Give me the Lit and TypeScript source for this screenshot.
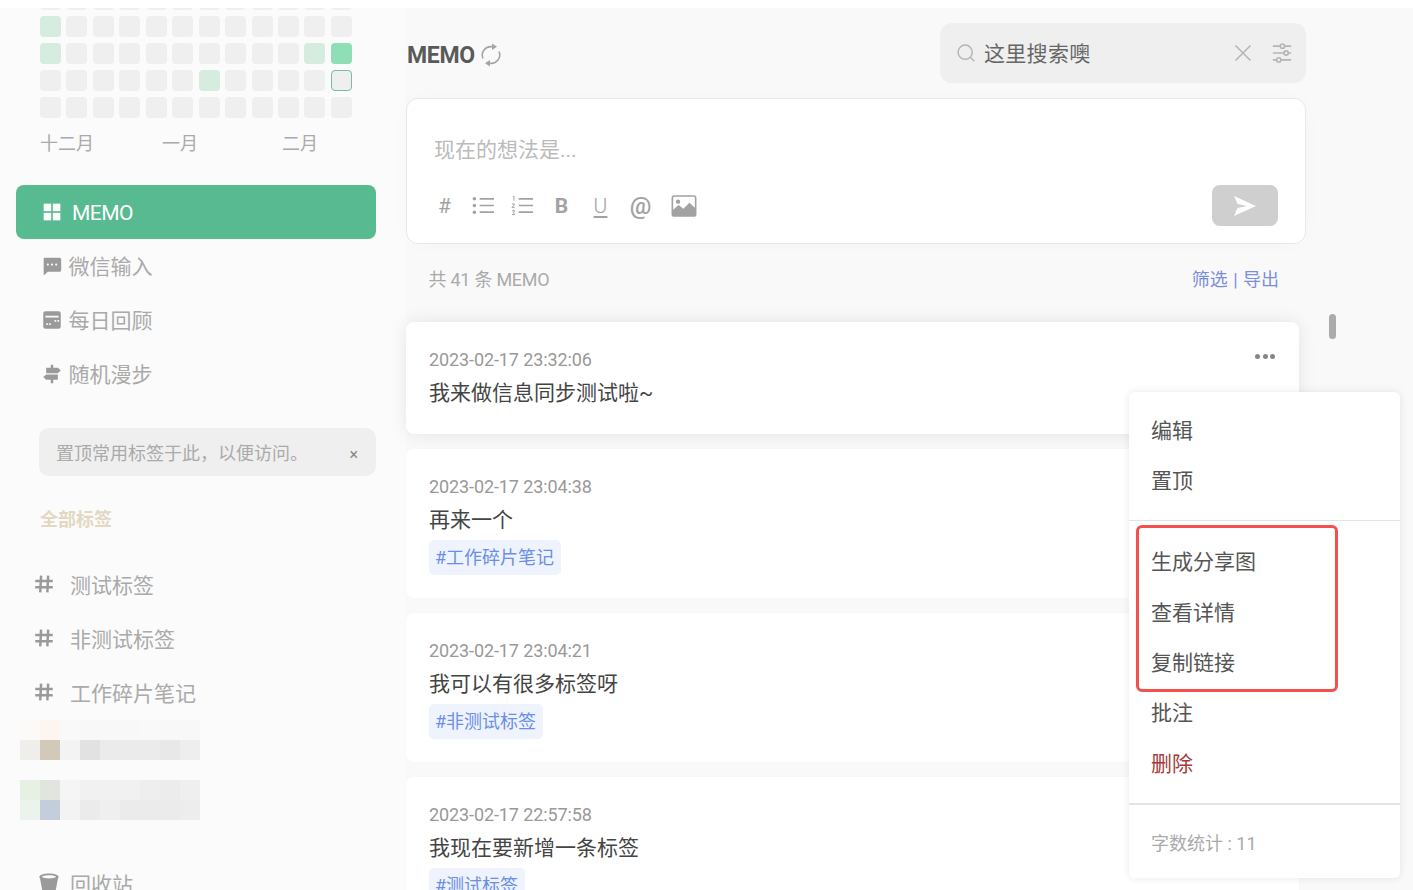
import { LitElement, html, css, svg } from 'lit';
import { customElement } from 'lit/decorators.js';

// heat map levels, 0 empty, 1 light, 2 mid, 3 today
const HEAT = [
  [0, 0, 0, 0, 0, 0, 0, 0, 0, 0, 0, 0],
  [1, 0, 0, 0, 0, 0, 0, 0, 0, 0, 0, 0],
  [1, 0, 0, 0, 0, 0, 0, 0, 0, 0, 1, 2],
  [0, 0, 0, 0, 0, 0, 1, 0, 0, 0, 0, 3],
  [0, 0, 0, 0, 0, 0, 0, 0, 0, 0, 0, 0],
];

const MOSAIC_A = [
  ['#fbfaf8', '#fdf5ef', '#f9f9f9', '#f8f8f8', '#f8f8f8', '#f8f8f8', '#f9f9f9', '#f8f8f8', '#f8f8f8'],
  ['#efeeea', '#d3c9b8', '#f3f3f3', '#e2e2e2', '#ebebeb', '#ebebeb', '#ebebeb', '#e8e8e8', '#eeeeee'],
];
const MOSAIC_B = [
  ['#e6f0e3', '#e2e5df', '#f5f5f5', '#f1f1f1', '#f1f1f1', '#f1f1f1', '#eeeeee', '#ececec', '#efefef'],
  ['#ecf2ec', '#c3ceda', '#f3f3f3', '#ebebeb', '#efefef', '#ebebeb', '#ebebeb', '#ebebeb', '#ededed'],
];

const MEMOS = [
  { time: '2023-02-17 23:04:38', text: '再来一个', tag: '#工作碎片笔记' },
  { time: '2023-02-17 23:04:21', text: '我可以有很多标签呀', tag: '#非测试标签' },
  { time: '2023-02-17 22:57:58', text: '我现在要新增一条标签', tag: '#测试标签' },
];

const icon = (size: number, body: unknown, box = 24) => html`<svg
  width=${size}
  height=${size}
  viewBox="0 0 ${box} ${box}"
  fill="currentColor"
>${body}</svg>`;

const ICONS = {
  grid: svg`<rect x="2" y="2" width="9" height="9"/><rect x="13" y="2" width="9" height="9"/><rect x="2" y="13" width="9" height="9"/><rect x="13" y="13" width="9" height="9"/>`,
  chat: svg`<path fill-rule="evenodd" d="M3 2h18a2 2 0 0 1 2 2v13a2 2 0 0 1-2 2H7l-5 4.500V3a1 1 0 0 1 1-1zm4 7a1.300 1.300 0 1 0 0 2.600A1.300 1.300 0 0 0 7 9zm5 0a1.300 1.300 0 1 0 0 2.600A1.300 1.300 0 0 0 12 9zm5 0a1.300 1.300 0 1 0 0 2.600A1.300 1.300 0 0 0 17 9z"/>`,
  calendar: svg`<path fill-rule="evenodd" d="M4 1.500h16A2.500 2.500 0 0 1 22.500 4v16a2.500 2.500 0 0 1-2.500 2.500H4A2.500 2.500 0 0 1 1.500 20V4A2.500 2.500 0 0 1 4 1.500zM4 7v2h16V7H4zm11 5v2h2v-2h-2zm3.500 0v2h2v-2h-2zM5 16v2h2v-2H5zm3.500 0v2h2v-2h-2z"/>`,
  sign: svg`<path d="M10.500 1h3v3.500H19l3.500 3.200L19 11H5V4.500h5.500zM5 12.500h14V19h-5.500v4h-3v-4H5l-3.500-3.300z"/>`,
  trash: svg`<path d="M12 1.500c5.800 0 10.500 1.400 10.500 3.800 0 .8-.3 1.500-.8 2L19.200 21c-.2 1.200-3.200 2-7.200 2s-7-.8-7.200-2L2.300 7.300c-.5-.5-.8-1.200-.8-2C1.500 2.900 6.200 1.500 12 1.500zm0 2c-4.200 0-7.500.8-7.500 1.800S7.800 7 12 7s7.500-.7 7.500-1.700S16.200 3.500 12 3.500z"/>`,
  image: svg`<path fill-rule="evenodd" d="M3 2h18a2.500 2.500 0 0 1 2.500 2.500v15A2.500 2.500 0 0 1 21 22H3a2.500 2.500 0 0 1-2.500-2.500v-15A2.500 2.500 0 0 1 3 2zm0 1.500a1 1 0 0 0-1 1v11l5-4.500 4.500 3.500 5.500-5.500 5 4.500V4.500a1 1 0 0 0-1-1H3zM6.500 6a2 2 0 1 1 0 4 2 2 0 0 1 0-4z"/>`,
  send: svg`<path d="M1 2l22 10L1 22l3.500-8L14 12 4.500 10z"/>`,
};

const lineIcon = (size: number, body: unknown) => html`<svg
  width=${size}
  height=${size}
  viewBox="0 0 24 24"
  fill="none"
  stroke="currentColor"
  stroke-width="1.800"
>${body}</svg>`;

const LINE = {
  refresh: svg`<path stroke-width="1.600" d="M4 15.500A8.500 8.500 0 0 1 13 3.700"/><path stroke-width="1.600" d="M20 8.500A8.500 8.500 0 0 1 11 20.300"/><path fill="currentColor" stroke="none" d="M13 .5l5 3.200L13 7zM11 17l-5 3.300 5 3.200z"/>`,
  search: svg`<circle cx="11" cy="11" r="8.500"/><path d="M17.500 17.500L22 22"/>`,
  close: svg`<path d="M3 3l18 18M21 3L3 21"/>`,
  sliders: svg`<path d="M2 4.500h8M15 4.500h7M2 12h12M19 12h3M2 19.500h4M11 19.500h11"/><circle cx="12.500" cy="4.500" r="2.300"/><circle cx="16.500" cy="12" r="2.300"/><circle cx="8.500" cy="19.500" r="2.300"/>`,
  list: svg`<path d="M8 5h15M8 12h15M8 19h15"/><g fill="currentColor" stroke="none"><circle cx="2.500" cy="5" r="1.800"/><circle cx="2.500" cy="12" r="1.800"/><circle cx="2.500" cy="19" r="1.800"/></g>`,
  olist: svg`<path d="M8 5h15M8 12h15M8 19h15"/><path stroke-width="1" d="M2 3l1-1v5M1 10.500h3L1 14h3M1 17.500h3l-1.500 2L4 21.500H1"/>`,
  hash: svg`<path stroke-width="3" d="M8.500 2L7.500 22M17 2l-1 20M1.500 8.500h21M1.500 16h21"/>`,
};

@customElement('app-root')
export class AppRoot extends LitElement {
  static styles = css`
    :host {
      display: block;
      font-family: Roboto, "Noto Sans CJK SC", sans-serif;
    }

    .page {
      position: relative;
      display: flex;
      height: 882px;
      overflow: hidden;
      border-top: 8px solid #fff;
      background: #f9f9fa;
    }

    .sidebar {
      flex: none;
      width: 406px;
      height: 100%;
      overflow: hidden;
      background: #fbfbfb;
    }

    .heat {
      display: grid;
      grid-template-columns: repeat(12, 21px);
      grid-auto-rows: 21px;
      column-gap: 5.45px;
      row-gap: 6px;
      margin: -19px 0 0 40px;
    }

    .cell {
      border-radius: 4px;
      background: #efefef;
      box-sizing: border-box;
    }

    .cell.l1 { background: #d5ecdf; }
    .cell.l2 { background: #8fdeb6; }
    .cell.l3 { border: 1px solid #78bd9c; }

    .months {
      display: flex;
      margin: 13px 0 0 40px;
      font-size: 18px;
      line-height: 26px;
      color: #aaa;
    }

    .months span:nth-child(1) { width: 122px; }
    .months span:nth-child(2) { width: 120px; }

    .nav {
      margin: 28px 30px 0 16px;
      display: flex;
      flex-direction: column;
    }

    .nav-item {
      display: flex;
      align-items: center;
      gap: 7px;
      height: 54px;
      padding-left: 25.5px;
      font-size: 21px;
      color: #aaa;
      border-radius: 8px;
    }

    .nav-item svg { color: #9a9a9a; }
    .nav-item span { margin-top: -2px; }

    .nav-item.active {
      gap: 10.5px;
      background: #57ba90;
      color: #fff;
      letter-spacing: -0.5px;
    }

    .nav-item.active svg { color: #fff; }
    .nav-item.active span { margin-top: 2px; }

    .tip {
      display: flex;
      align-items: center;
      justify-content: space-between;
      height: 48px;
      margin: 27px 30px 0 39px;
      padding: 0 18px 0 17px;
      border-radius: 10px;
      background: #efefef;
      font-size: 18px;
      color: #aaa;
    }

    .tip i {
      font-style: normal;
      font-size: 16px;
      color: #888;
      margin-top: 4px;
    }

    .tags-title {
      margin: 31px 0 0 40px;
      font-size: 18px;
      line-height: 26px;
      font-weight: 700;
      color: #e2d8c2;
    }

    .tags {
      margin: 24px 0 0 34px;
    }

    .tag-row {
      display: flex;
      align-items: center;
      gap: 16px;
      height: 54px;
      font-size: 21px;
      color: #aaa;
    }

    .tag-row svg {
      flex: none;
      color: #9a9a9a;
    }

    .mosaic {
      display: grid;
      grid-template-columns: repeat(9, 20px);
      grid-auto-rows: 20px;
      margin-left: 20px;
    }

    .mosaic.first { margin-top: 1px; }
    .mosaic.second { margin-top: 20px; }

    .trash {
      display: flex;
      align-items: center;
      gap: 10px;
      margin: 46px 0 0 38px;
      height: 34px;
      font-size: 21px;
      color: #aaa;
    }

    .trash svg { color: #9a9a9a; }

    .main {
      flex: none;
      width: 900px;
    }

    .head {
      display: flex;
      align-items: center;
      justify-content: space-between;
      height: 60px;
      margin: 15px 0;
    }

    .title {
      display: flex;
      align-items: center;
      gap: 4px;
      padding: 4px 0 0 1px;
      font-size: 23px;
      font-weight: 700;
      letter-spacing: -0.3px;
      color: #5a5a5a;
    }

    .title svg { color: #a5a5a5; }

    .search {
      display: flex;
      align-items: center;
      width: 366px;
      height: 60px;
      box-sizing: border-box;
      padding: 0 13px 0 16px;
      border-radius: 12px;
      background: #efefef;
      font-size: 21px;
      color: #666;
    }

    .search svg { flex: none; color: #b5b5b5; }
    .search span { flex: 1; margin: -2px 0 0 8px; letter-spacing: 0.3px; }
    .search .close { display: flex; margin-right: 18px; }

    .editor {
      height: 146px;
      box-sizing: border-box;
      padding: 35px 27px 0 27px;
      border: 1px solid #e8e8e8;
      border-radius: 12px;
      background: #fff;
      box-shadow: 0 0 20px rgba(0, 0, 0, 0.02);
    }

    .placeholder {
      font-size: 21px;
      line-height: 32px;
      color: #bbb;
    }

    .tools {
      display: flex;
      align-items: center;
      height: 41px;
      margin: 19px 0 0 -9px;
    }

    .tool {
      display: flex;
      align-items: center;
      justify-content: center;
      width: 39px;
      color: #a2a2a2;
      font-size: 21px;
      line-height: 24px;
    }

    .tool.bold { font-weight: 700; }
    .tool.under { text-decoration: underline; text-underline-offset: 3px; font-weight: 300; }
    .tool.at { font-size: 24px; font-weight: 500; margin-left: 1px; }
    .tool.pic { margin-left: 4px; }

    .send {
      display: flex;
      align-items: center;
      justify-content: center;
      width: 66px;
      height: 41px;
      margin-left: auto;
      border-radius: 8px;
      background: #cfcfcf;
      color: #fff;
    }

    .count {
      display: flex;
      align-items: center;
      justify-content: space-between;
      height: 68px;
      margin-bottom: 10px;
      padding: 0 27px 0 22.5px;
      font-size: 18px;
      letter-spacing: -0.25px;
      color: #aaa;
    }

    .count a {
      color: #7b8fd8;
      letter-spacing: 0;
      word-spacing: 1px;
    }

    .cards {
      display: flex;
      flex-direction: column;
      gap: 15px;
      width: 893px;
    }

    .card {
      flex: none;
      height: 149px;
      box-sizing: border-box;
      padding: 26px 23px 0;
      border-radius: 8px;
      background: #fff;
      box-shadow: 0 0 4px rgba(0, 0, 0, 0.01);
    }

    .card.hot {
      height: 112px;
      box-shadow: 0 0 18px rgba(0, 0, 0, 0.09);
    }

    .card-top {
      display: flex;
      justify-content: space-between;
      align-items: flex-start;
    }

    .time {
      font-size: 18px;
      line-height: 24px;
      letter-spacing: -0.1px;
      color: #999;
    }

    .dots {
      display: flex;
      gap: 2.5px;
      margin: 6px 1px 0 0;
    }

    .dots i {
      width: 5px;
      height: 5px;
      border-radius: 50%;
      background: #858585;
    }

    .text {
      font-size: 21px;
      line-height: 34px;
      margin-top: 3.5px;
      color: #444;
    }

    .tag {
      display: inline-block;
      margin-top: 3px;
      padding: 0 7px 0 6px;
      height: 35px;
      line-height: 35px;
      border-radius: 5px;
      background: #eef3fe;
      font-size: 18px;
      color: #6b8fe6;
    }

    .scroll-thumb {
      position: absolute;
      left: 1329px;
      top: 306px;
      width: 7px;
      height: 25px;
      border-radius: 4px;
      background: #ababab;
    }

    .menu {
      position: absolute;
      left: 1129px;
      top: 384px;
      width: 271px;
      height: 486px;
      box-sizing: border-box;
      padding-top: 14px;
      border-radius: 6px;
      background: #fff;
      box-shadow: 0 0 8px rgba(0, 0, 0, 0.09);
    }

    .menu-item {
      height: 50.4px;
      line-height: 50.4px;
      padding-left: 22px;
      font-size: 21px;
      color: #555;
    }

    .menu-item.danger { color: #a33a3a; }

    .menu hr {
      height: 1px;
      margin: 13px 0 16.4px;
      border: 0;
      background: #e3e3e8;
    }

    .menu hr.thick {
      height: 2px;
      margin: 14px 0 0;
    }

    .stats {
      padding: 26px 0 0 22px;
      font-size: 18px;
      line-height: 26px;
      color: #aaa;
    }

    .mark {
      position: absolute;
      left: 7px;
      top: 133px;
      width: 202px;
      height: 167px;
      box-sizing: border-box;
      border: 3.5px solid #f4504c;
      border-radius: 6px;
    }
  `;

  renderMosaic(rows: string[][], cls: string) {
    return html`<div class="mosaic ${cls}">
      ${rows.flat().map((c) => html`<div style="background:${c}"></div>`)}
    </div>`;
  }

  renderSidebar() {
    return html`<aside class="sidebar">
      <div class="heat">
        ${HEAT.flat().map((l) => html`<div class="cell l${l}"></div>`)}
      </div>
      <div class="months"><span>十二月</span><span>一月</span><span>二月</span></div>
      <nav class="nav">
        <div class="nav-item active">${icon(20, ICONS.grid)}<span>MEMO</span></div>
        <div class="nav-item">${icon(20, ICONS.chat)}<span>微信输入</span></div>
        <div class="nav-item">${icon(20, ICONS.calendar)}<span>每日回顾</span></div>
        <div class="nav-item">${icon(20, ICONS.sign)}<span>随机漫步</span></div>
      </nav>
      <div class="tip"><span>置顶常用标签于此，以便访问。</span><i>×</i></div>
      <div class="tags-title">全部标签</div>
      <div class="tags">
        ${['测试标签', '非测试标签', '工作碎片笔记'].map(
          (t) => html`<div class="tag-row">${lineIcon(20, LINE.hash)}<span>${t}</span></div>`,
        )}
      </div>
      ${this.renderMosaic(MOSAIC_A, 'first')}
      ${this.renderMosaic(MOSAIC_B, 'second')}
      <div class="trash">${icon(22, ICONS.trash)}<span>回收站</span></div>
    </aside>`;
  }

  renderEditor() {
    return html`<section class="editor">
      <div class="placeholder">现在的想法是...</div>
      <div class="tools">
        <span class="tool">#</span>
        <span class="tool">${lineIcon(23, LINE.list)}</span>
        <span class="tool">${lineIcon(23, LINE.olist)}</span>
        <span class="tool bold">B</span>
        <span class="tool under">U</span>
        <span class="tool at">@</span>
        <span class="tool pic">${icon(26, ICONS.image)}</span>
        <div class="send">${icon(24, ICONS.send)}</div>
      </div>
    </section>`;
  }

  renderMenu() {
    return html`<div class="menu">
      <div class="menu-item">编辑</div>
      <div class="menu-item">置顶</div>
      <hr />
      <div class="menu-item">生成分享图</div>
      <div class="menu-item">查看详情</div>
      <div class="menu-item">复制链接</div>
      <div class="menu-item">批注</div>
      <div class="menu-item danger">删除</div>
      <hr class="thick" />
      <div class="stats">字数统计 : 11</div>
      <div class="mark"></div>
    </div>`;
  }

  render() {
    return html`<div class="page">
      ${this.renderSidebar()}
      <main class="main">
        <header class="head">
          <div class="title"><span>MEMO</span>${lineIcon(24, LINE.refresh)}</div>
          <div class="search">
            ${lineIcon(20, LINE.search)}
            <span>这里搜索噢</span>
            <div class="close">${lineIcon(20, LINE.close)}</div>
            ${lineIcon(22, LINE.sliders)}
          </div>
        </header>
        ${this.renderEditor()}
        <div class="count"><span>共 41 条 MEMO</span><a>筛选 | 导出</a></div>
        <div class="cards">
          <article class="card hot">
            <div class="card-top">
              <div class="time">2023-02-17 23:32:06</div>
              <div class="dots"><i></i><i></i><i></i></div>
            </div>
            <div class="text">我来做信息同步测试啦~</div>
          </article>
          ${MEMOS.map(
            (m) => html`<article class="card">
              <div class="time">${m.time}</div>
              <div class="text">${m.text}</div>
              <span class="tag">${m.tag}</span>
            </article>`,
          )}
        </div>
      </main>
      <div class="scroll-thumb"></div>
      ${this.renderMenu()}
    </div>`;
  }
}
